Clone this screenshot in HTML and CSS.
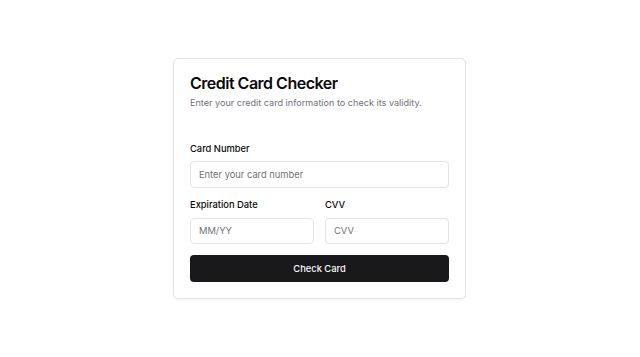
FILE: index.html
```html
<!DOCTYPE html>
<html lang="en">
<head>
<meta charset="utf-8">
<title>Credit Card Checker</title>
<link rel="stylesheet" href="styles.css">
</head>
<body>
<div class="page">
  <div class="card">
    <div class="card-header">
      <h1 class="card-title">Credit Card Checker</h1>
      <p class="card-desc">Enter your credit card information to check its validity.</p>
    </div>
    <form class="card-content">
      <div class="field">
        <label class="label" for="num">Card Number</label>
        <input class="input" id="num" type="text" placeholder="Enter your card number">
      </div>
      <div class="row">
        <div class="field">
          <label class="label" for="exp">Expiration Date</label>
          <input class="input" id="exp" type="text" placeholder="MM/YY">
        </div>
        <div class="field">
          <label class="label" for="cvv">CVV</label>
          <input class="input" id="cvv" type="text" placeholder="CVV">
        </div>
      </div>
      <button class="button" type="button">Check Card</button>
    </form>
  </div>
</div>
</body>
</html>
```
FILE: styles.css
```css
* { box-sizing: border-box; }
html, body { margin: 0; padding: 0; }
body {
  background: #ffffff;
  font-family: Inter, "Noto Sans", sans-serif;
  color: #09090b;
}
.page {
  height: 100vh;
  display: flex;
  align-items: center;
  justify-content: center;
}
.card {
  width: 293px;
  margin-right: 1px;
  border: 1px solid #e4e4e7;
  border-radius: 5px;
  background: #fff;
  box-shadow: 0 1px 2px rgba(0,0,0,0.05);
}
.card-header {
  padding: 16px 16px 0;
  display: flex;
  flex-direction: column;
  gap: 4.5px;
}
.card-title {
  margin: 0;
  font-size: 16px;
  line-height: 16px;
  font-weight: 600;
  letter-spacing: -0.5px;
}
.card-desc {
  margin: 0;
  font-size: 9.1px;
  line-height: 13.33px;
  color: #71717a;
}
.card-content {
  padding: 34.5px 16px 16px;
  margin: 0;
  display: flex;
  flex-direction: column;
}
.field {
  display: flex;
  flex-direction: column;
  gap: 8px;
  min-width: 0;
}
.row {
  margin-top: 12.5px;
  display: grid;
  grid-template-columns: 1fr 1fr;
  gap: 11px;
}
.label {
  font-size: 9.33px;
  line-height: 9.33px;
  font-weight: 500;
}
.input {
  width: 100%;
  height: 26.67px;
  border: 1px solid #e4e4e7;
  border-radius: 4px;
  padding: 0 8px;
  font-family: inherit;
  font-size: 9.33px;
  color: #09090b;
  background: #fff;
  outline: none;
}
.input::placeholder { color: #71717a; }
.button {
  margin-top: 10.67px;
  height: 26.67px;
  border: none;
  border-radius: 4px;
  background: #18181b;
  color: #fafafa;
  font-family: inherit;
  font-size: 9.33px;
  font-weight: 500;
}
```
